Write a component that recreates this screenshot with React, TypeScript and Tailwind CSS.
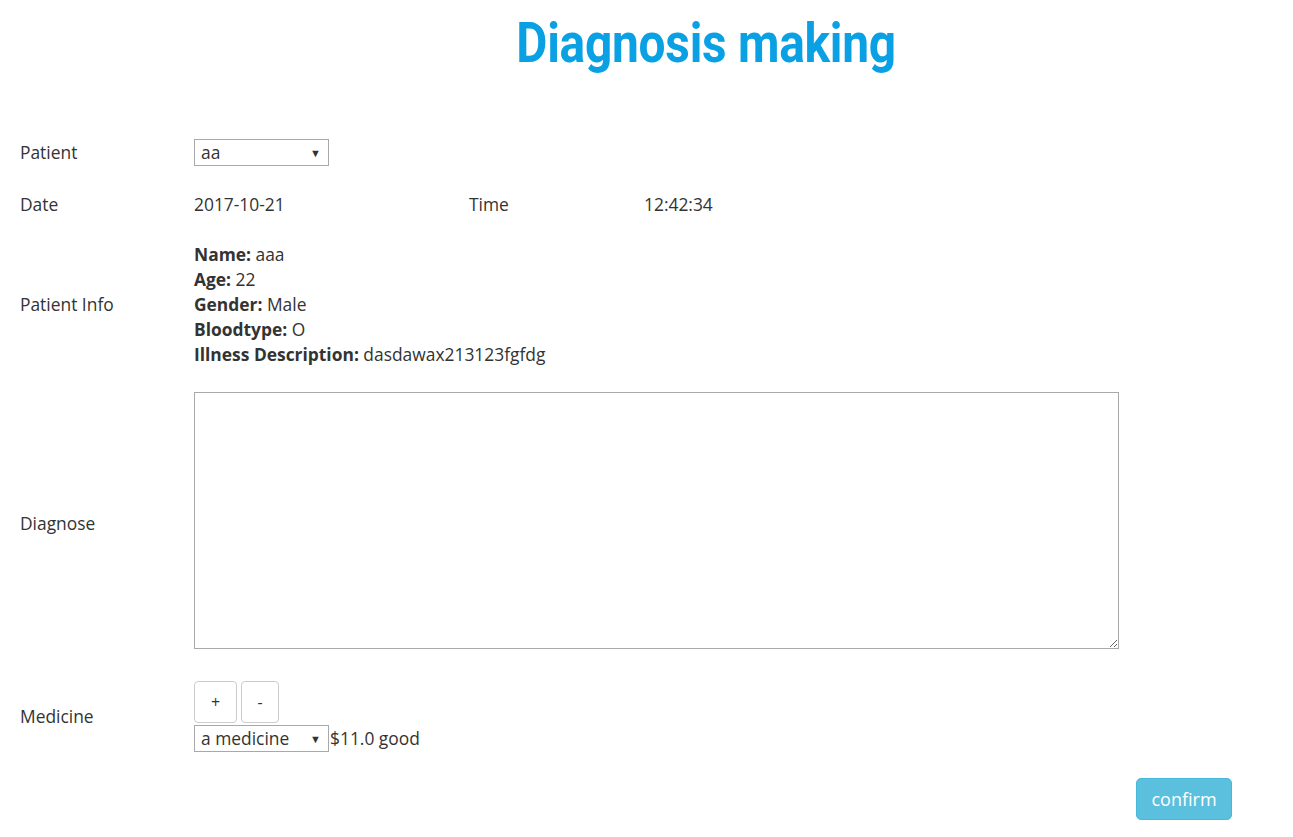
import React from "react";

function FakeSelect({ value, className = "" }: { value: string; className?: string }) {
  return (
    <div
      className={`flex items-center justify-between border border-[#a9a9a9] bg-white pl-[6px] pr-[7px] h-[27px] w-[135px] text-[#333] ${className}`}
    >
      <span className="leading-none">{value}</span>
      <span className="text-[11px] text-[#333] leading-none">▼</span>
    </div>
  );
}

export default function App() {
  return (
    <div
      className="min-h-[837px] bg-white text-[#333] text-[17.4px]"
      style={{ fontFamily: '"Open Sans", "Noto Sans", sans-serif' }}
    >
      <div className="h-[100px] flex justify-center pl-[120px]">
        <h1
          className="mt-[12px] text-[55px] leading-[62px] font-bold text-[#0aa1e4] tracking-[-0.3px] scale-x-[0.87]"
          style={{ fontFamily: 'Roboto, "Noto Sans", sans-serif' }}
        >
          Diagnosis making
        </h1>
      </div>

      <div className="pl-[20px]">
        {/* Patient */}
        <div className="flex items-center mt-[39px] h-[27px]">
          <div className="w-[174px]">Patient</div>
          <FakeSelect value="aa" />
        </div>

        {/* Date / Time */}
        <div className="flex items-center mt-[26px] h-[25px]">
          <div className="w-[174px]">Date</div>
          <div className="w-[275px]">2017-10-21</div>
          <div className="w-[175px]">Time</div>
          <div>12:42:34</div>
        </div>

        {/* Patient Info */}
        <div className="flex items-center mt-[25px]">
          <div className="w-[174px]">Patient Info</div>
          <div className="leading-[25px]">
            <div>
              <b>Name:</b> aaa
            </div>
            <div>
              <b>Age:</b> 22
            </div>
            <div>
              <b>Gender:</b> Male
            </div>
            <div>
              <b>Bloodtype:</b> O
            </div>
            <div>
              <b>Illness Description:</b> dasdawax213123fgfdg
            </div>
          </div>
        </div>

        {/* Diagnose */}
        <div className="flex items-center mt-[25px]">
          <div className="w-[174px] pt-[5px]">Diagnose</div>
          <textarea className="w-[925px] h-[257px] border border-[#a9a9a9] bg-white resize" />
        </div>

        {/* Medicine */}
        <div className="flex items-center mt-[32px]">
          <div className="w-[174px]">Medicine</div>
          <div className="flex flex-col">
            <div className="flex gap-[4px]">
              <button className="w-[43px] h-[42px] border border-[#ccc] rounded-[4px] bg-white text-[16px] text-[#333]">
                +
              </button>
              <button className="w-[38px] h-[42px] border border-[#ccc] rounded-[4px] bg-white text-[16px] text-[#333]">
                -
              </button>
            </div>
            <div className="flex items-center mt-[2px]">
              <FakeSelect value="a medicine" className="h-[26px]" />
              <span className="ml-[1px]">$11.0 good</span>
            </div>
          </div>
        </div>

        {/* Confirm */}
        <div className="flex mt-[26px] pl-[1116px]">
          <button className="w-[96px] h-[42px] rounded-[5px] bg-[#5bc0de] border border-[#46b8da] text-white text-[18px]">
            confirm
          </button>
        </div>
      </div>
    </div>
  );
}
